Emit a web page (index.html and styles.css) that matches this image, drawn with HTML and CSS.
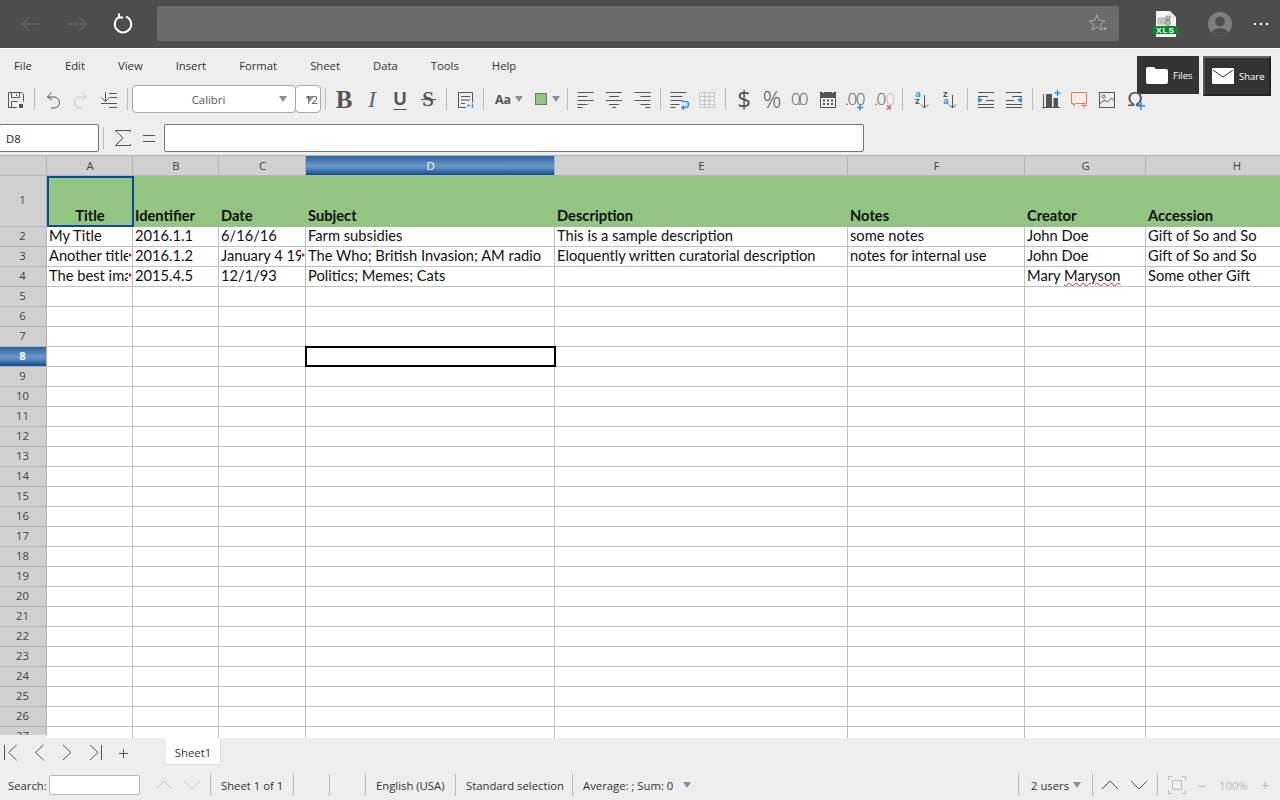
FILE: index.html
```html
<!DOCTYPE html>
<html lang="en">
<head>
<meta charset="utf-8">
<title>Sheet1</title>
<link rel="stylesheet" href="styles.css">
</head>
<body>
<div class="page">
  <header class="browser">
    <svg class="b-ic b-back" viewBox="0 0 24 24"><path d="M21 12H3M10 5l-7 7 7 7"/></svg>
    <svg class="b-ic b-fwd" viewBox="0 0 24 24"><path d="M3 12h18M14 5l7 7-7 7"/></svg>
    <svg class="b-ic b-reload" viewBox="0 0 24 24"><path d="M9 4.600a8.200 8.200 0 1 0 6 0"/><path d="M8 1.500v4h4" /></svg>
    <div class="address">
      <svg class="b-star" viewBox="0 0 20 20"><path d="M9 2l2.200 5.400 5.800.4-4.500 3.700 1.400 5.600L9 14.100l-4.900 3 1.400-5.600L1 7.800l5.800-.4z"/><path d="M15 15.500h4M17 13.500v4"/></svg>
    </div>
    <svg class="b-xls" viewBox="0 0 26 26"><path class="x-doc" d="M3 0h14l6 6v20H3z"/><path class="x-fold" d="M17 0v6h6"/><path class="x-grid" d="M5 7h11v6H5zM5 9h11M5 11h11M8 7v6M11 7v6M14 7v6"/><circle class="x-c" cx="15" cy="7" r="2"/><circle class="x-c" cx="15" cy="12" r="2.500"/><rect class="x-band" x="0" y="15" width="25" height="8"/><text class="x-t" x="12.500" y="22">XLS</text></svg>
    <svg class="b-avatar" viewBox="0 0 24 24"><circle class="av-bg" cx="12" cy="12" r="12"/><circle class="av-fg" cx="12" cy="9.500" r="5"/><path class="av-fg" d="M3.500 20.500a9 6.500 0 0 1 17 0A12 12 0 0 1 12 24a12 12 0 0 1-8.500-3.500z"/></svg>
    <div class="b-dots"><i></i><i></i><i></i></div>
  </header>

  <nav class="menu">
    <span>File</span><span>Edit</span><span>View</span><span>Insert</span><span>Format</span><span>Sheet</span><span>Data</span><span>Tools</span><span>Help</span>
  </nav>

  <a class="float-btn files">
    <svg viewBox="0 0 22 17"><path d="M0 2a2 2 0 0 1 2-2h6l2 2h10a2 2 0 0 1 2 2v11a2 2 0 0 1-2 2H2a2 2 0 0 1-2-2z"/></svg>
    <span>Files</span>
  </a>
  <a class="float-btn share">
    <svg viewBox="0 0 22 16"><rect width="22" height="16" rx="1"/><path class="env" d="M1 2l10 7 10-7"/></svg>
    <span>Share</span>
  </a>

  <div class="toolbar">
    <button class="tb"><svg class="ic" viewBox="0 0 24 24"><path d="M4.500 5.500h13l2 2v7M12.500 20.500h-8zM4.500 5.500v15M7.500 5.500v5h8v-5M12.500 7v2M7.500 20.500v-6h6"/><rect class="solid" x="15" y="17" width="4" height="4"/></svg></button>
    <i class="sep"></i>
    <button class="tb"><svg class="ic" viewBox="0 0 24 24"><path d="M10.500 5.500L6.500 10l4.500 3M6.500 10H13a5.500 5.500 0 0 1 0 11h-3"/></svg></button>
    <button class="tb"><svg class="ic off" viewBox="0 0 24 24"><path d="M13.500 5.500l4 4.500-4.500 3M17.500 10H11a5.500 5.500 0 0 0 0 11h3"/></svg></button>
    <button class="tb"><svg class="ic" viewBox="0 0 24 24"><path d="M8.500 5v9M4.500 10.500l4 4 4-4M12 6.500h8M13 10.500h7M4 16.500h16M12 20.500h8"/></svg></button>
    <i class="sep"></i>
    <div class="combo font-combo"><span>Calibri</span><b class="caret"></b></div>
    <div class="combo size-combo"><b class="caret"></b><span>12</span></div>
    <i class="sep"></i>
    <button class="tb g g-b">B</button>
    <button class="tb g g-i">I</button>
    <button class="tb g g-u">U</button>
    <button class="tb g g-s">S</button>
    <i class="sep"></i>
    <button class="tb"><svg class="ic" viewBox="0 0 24 24"><path d="M13 20.500H5.500v-15h14v10M8 9.500h9M8 13h9M8 16.500h4"/><path class="blue" d="M14 18.500h3"/><path class="blue" d="M19.500 16.500v4.500"/></svg></button>
    <i class="sep"></i>
    <div class="split split-aa"><span class="aa">Aa</span><b class="caret"></b></div>
    <div class="split split-sw"><i class="swatch"></i><b class="caret"></b></div>
    <i class="sep"></i>
    <button class="tb"><svg class="ic" viewBox="0 0 24 24"><path d="M3.500 5.500h16M3.500 9.500h10M3.500 13.500h16M3.500 17.500h10M3.500 20.500h5"/></svg></button>
    <button class="tb"><svg class="ic" viewBox="0 0 24 24"><path d="M4 5.500h16M7 9.500h10M4 13.500h16M7 17.500h10M10 20.500h4"/></svg></button>
    <button class="tb"><svg class="ic" viewBox="0 0 24 24"><path d="M4.500 5.500h16M10.500 9.500h10M4.500 13.500h16M10.500 17.500h10M15.500 20.500h5"/></svg></button>
    <i class="sep"></i>
    <button class="tb"><svg class="ic" viewBox="0 0 24 24"><path d="M3.500 5.500h16M3.500 9.500h12M3.500 13.500h12M3.500 17.500h9M3.500 20.500h5"/><path class="blue" d="M15 14.500h3.500a2.500 2.500 0 0 1 0 6H15M17 18.500l-2 2 2 2"/></svg></button>
    <button class="tb"><svg class="ic off" viewBox="0 0 24 24"><path d="M4.500 5.500h15v15h-15zM4.500 9.500h15M4.500 13.500h15M4.500 17.500h15M9.500 5.500v15M14.500 5.500v15"/></svg></button>
    <i class="sep"></i>
    <button class="tb g g-cur">$</button>
    <button class="tb g g-pct">%</button>
    <button class="tb"><svg class="ic" viewBox="0 0 24 24"><text class="num num-a" x="3" y="18">0.0</text></svg></button>
    <button class="tb"><svg class="ic" viewBox="0 0 24 24"><path d="M4.500 7.500h15v13h-15z"/><path class="solid" d="M4 5h16v6H4z"/><path class="dash" d="M7 13.500h2M11 13.500h2M15 13.500h2M7 17h2M11 17h2M15 17h2"/><path class="light" d="M7.500 4v2M16.500 4v2"/></svg></button>
    <button class="tb"><svg class="ic" viewBox="0 0 24 24"><text class="num" x="1" y="18">.00</text><path class="blue" d="M13 20.500h6M16 17.500v6"/></svg></button>
    <button class="tb"><svg class="ic" viewBox="0 0 24 24"><text class="num" x="2" y="18">.0</text><text class="num num-off" x="13.500" y="18">0</text><path class="red" d="M15 18.500l4 4M19 18.500l-4 4"/></svg></button>
    <i class="sep"></i>
    <button class="tb"><svg class="ic" viewBox="0 0 24 24"><text class="az az-b" x="6" y="10">a</text><text class="az" x="6" y="17">z</text><path d="M15.500 8v13M12 17.500l3.500 3.500 3.500-3.500"/></svg></button>
    <button class="tb"><svg class="ic" viewBox="0 0 24 24"><text class="az" x="6" y="10">z</text><text class="az az-b" x="6" y="17">a</text><path d="M15.500 8v13M12 17.500l3.500 3.500 3.500-3.500"/></svg></button>
    <i class="sep"></i>
    <button class="tb"><svg class="ic" viewBox="0 0 24 24"><path d="M4 5.500h16M4 9.500h10M12 13.500h8M4 17.500h16M4 20.500h16"/><path class="bluef" d="M4 10v6l5-3z"/></svg></button>
    <button class="tb"><svg class="ic" viewBox="0 0 24 24"><path d="M4 5.500h16M10 9.500h10M4 13.500h8M4 17.500h16M4 20.500h16"/><path class="bluef" d="M20 10v6l-5-3z"/></svg></button>
    <i class="sep"></i>
    <button class="tb"><svg class="ic" viewBox="0 0 24 24"><path d="M4.500 7v14M3 20.500h18"/><path class="solid" d="M7 7h6v13H7zM14.500 11H19v9h-4.500z"/><path class="blue" d="M15.500 6h6M18.500 3v6"/></svg></button>
    <button class="tb"><svg class="ic orange" viewBox="0 0 24 24"><path d="M4.500 5.500h15v11h-11l-2 2v-2h-2zM14 18.500h6M17 15.500v6"/></svg></button>
    <button class="tb"><svg class="ic" viewBox="0 0 24 24"><rect x="4.500" y="5.500" width="15" height="15"/><circle cx="8.500" cy="9.500" r="1.500"/><path d="M4.500 17l5-4 3 2 4-4 3 3"/></svg></button>
    <button class="tb omega"><span>Ω</span><svg class="plus" viewBox="0 0 10 10"><path class="blue" d="M1 5h8M5 1v8"/></svg></button>
  </div>

  <div class="formula">
    <div class="namebox">D8</div>
    <i class="fsep"></i>
    <svg class="f-ic f-sigma" viewBox="0 0 18 18"><path d="M16.500 3V1.500h-15L9 9l-7.500 7.500h15V15"/></svg>
    <svg class="f-ic f-eq" viewBox="0 0 14 18"><path d="M1 6.500h12M1 12.500h12"/></svg>
    <div class="f-input"></div>
  </div>

  <section class="sheet">
    <div class="row head">
      <b class="corner"></b><b>A</b><b>B</b><b>C</b><b class="active">D</b><b>E</b><b>F</b><b>G</b><b>H</b>
    </div>
    <div class="row r1"><b>1</b><i class="ctr a1">Title</i><i>Identifier</i><i>Date</i><i>Subject</i><i>Description</i><i>Notes</i><i>Creator</i><i>Accession</i></div>
    <div class="row"><b>2</b><i>My Title</i><i>2016.1.1</i><i>6/16/16</i><i>Farm subsidies</i><i>This is a sample description</i><i>some notes</i><i>John Doe</i><i>Gift of So and So</i></div>
    <div class="row"><b>3</b><i class="clip">Another title here<u></u></i><i>2016.1.2</i><i class="clip">January 4 1967<u></u></i><i>The Who; British Invasion; AM radio</i><i>Eloquently written curatorial description</i><i>notes for internal use</i><i>John Doe</i><i>Gift of So and So</i></div>
    <div class="row"><b>4</b><i class="clip">The best image ever<u></u></i><i>2015.4.5</i><i>12/1/93</i><i>Politics; Memes; Cats</i><i></i><i></i><i>Mary <span class="typo">Maryson</span></i><i>Some other Gift</i></div>
    <div class="row"><b>5</b><i></i><i></i><i></i><i></i><i></i><i></i><i></i><i></i></div>
    <div class="row"><b>6</b><i></i><i></i><i></i><i></i><i></i><i></i><i></i><i></i></div>
    <div class="row"><b>7</b><i></i><i></i><i></i><i></i><i></i><i></i><i></i><i></i></div>
    <div class="row"><b class="active">8</b><i></i><i></i><i></i><i class="sel"></i><i></i><i></i><i></i><i></i></div>
    <div class="row"><b>9</b><i></i><i></i><i></i><i></i><i></i><i></i><i></i><i></i></div>
    <div class="row"><b>10</b><i></i><i></i><i></i><i></i><i></i><i></i><i></i><i></i></div>
    <div class="row"><b>11</b><i></i><i></i><i></i><i></i><i></i><i></i><i></i><i></i></div>
    <div class="row"><b>12</b><i></i><i></i><i></i><i></i><i></i><i></i><i></i><i></i></div>
    <div class="row"><b>13</b><i></i><i></i><i></i><i></i><i></i><i></i><i></i><i></i></div>
    <div class="row"><b>14</b><i></i><i></i><i></i><i></i><i></i><i></i><i></i><i></i></div>
    <div class="row"><b>15</b><i></i><i></i><i></i><i></i><i></i><i></i><i></i><i></i></div>
    <div class="row"><b>16</b><i></i><i></i><i></i><i></i><i></i><i></i><i></i><i></i></div>
    <div class="row"><b>17</b><i></i><i></i><i></i><i></i><i></i><i></i><i></i><i></i></div>
    <div class="row"><b>18</b><i></i><i></i><i></i><i></i><i></i><i></i><i></i><i></i></div>
    <div class="row"><b>19</b><i></i><i></i><i></i><i></i><i></i><i></i><i></i><i></i></div>
    <div class="row"><b>20</b><i></i><i></i><i></i><i></i><i></i><i></i><i></i><i></i></div>
    <div class="row"><b>21</b><i></i><i></i><i></i><i></i><i></i><i></i><i></i><i></i></div>
    <div class="row"><b>22</b><i></i><i></i><i></i><i></i><i></i><i></i><i></i><i></i></div>
    <div class="row"><b>23</b><i></i><i></i><i></i><i></i><i></i><i></i><i></i><i></i></div>
    <div class="row"><b>24</b><i></i><i></i><i></i><i></i><i></i><i></i><i></i><i></i></div>
    <div class="row"><b>25</b><i></i><i></i><i></i><i></i><i></i><i></i><i></i><i></i></div>
    <div class="row"><b>26</b><i></i><i></i><i></i><i></i><i></i><i></i><i></i><i></i></div>
    <div class="row last"><b>27</b><i></i><i></i><i></i><i></i><i></i><i></i><i></i><i></i></div>
  </section>

  <div class="tabs">
    <svg class="nav" viewBox="0 0 28 24"><path d="M4.500 4v15M16.500 4l-8 7.500 8 7.500"/></svg>
    <svg class="nav" viewBox="0 0 28 24"><path d="M15.500 4l-8 7.500 8 7.500"/></svg>
    <svg class="nav" viewBox="0 0 28 24"><path d="M7 4l8 7.500-8 7.500"/></svg>
    <svg class="nav" viewBox="0 0 28 24"><path d="M17.500 4v15M6 4l8 7.500-8 7.500"/></svg>
    <svg class="nav" viewBox="0 0 28 24"><path d="M7 12.500h9M11.500 8v9"/></svg>
    <div class="tab">Sheet1</div>
  </div>

  <footer class="status">
    <div class="st-search">
      <label>Search:</label>
      <div class="search-box"></div>
      <svg class="st-ar off" viewBox="0 0 18 10"><path d="M1 9l8-8 8 8"/></svg>
      <svg class="st-ar off" viewBox="0 0 18 10"><path d="M1 1l8 8 8-8"/></svg>
    </div>
    <div class="cell c-sheet">Sheet 1 of 1</div>
    <div class="cell c-empty"></div>
    <div class="cell c-empty"></div>
    <div class="cell c-lang">English (USA)</div>
    <div class="cell c-mode">Standard selection</div>
    <div class="cell c-sum">Average: ; Sum: 0<b class="caret"></b></div>
    <div class="cell c-users"><span>2 users</span><b class="caret"></b></div>
    <div class="cell c-arrows">
      <svg class="st-ar" viewBox="0 0 18 10"><path d="M1 9l8-8 8 8"/></svg>
      <svg class="st-ar" viewBox="0 0 18 10"><path d="M1 1l8 8 8-8"/></svg>
    </div>
    <div class="cell c-zoom">
      <svg class="fit" viewBox="0 0 18 18"><path d="M4.500 4.500h9v9h-9z"/><path d="M.5 4V.5H4M14 .5h3.500V4M17.500 14v3.500H14M4 17.500H.5V14"/></svg>
      <span class="z-minus">−</span><span class="z-val">100%</span><span class="z-plus">+</span>
    </div>
  </footer>
</div>
</body>
</html>
```
FILE: styles.css
```css
* { box-sizing: border-box; }
html, body { margin: 0; padding: 0; }
body { font-family: "Open Sans", "Noto Sans", sans-serif; font-size: 11.300px; color: #333; background: #eee; overflow: hidden; }
.page { position: relative; display: flex; flex-direction: column; width: 1280px; height: 800px; overflow: hidden; background: #eee; }

/* Browser chrome */
.browser { display: flex; align-items: center; height: 49px; flex: none; padding: 0 0 1px 19px; background: #4d4d4d; border-bottom: 1px solid #fff; }
.b-ic { width: 24px; height: 24px; fill: none; stroke-width: 1; flex: none; }
.b-back, .b-fwd { stroke: #6d6d6d; }
.b-back { margin-right: 22px; }
.b-fwd { margin-right: 22px; }
.b-reload { stroke: #fff; stroke-width: 2; }
.address { display: flex; align-items: center; justify-content: flex-end; width: 962px; height: 35px; margin: -1px 0 0 22px; padding-right: 11px; background: #6b6b6b; border-radius: 3px; }
.b-star { width: 20px; height: 20px; fill: none; stroke: #aaa; stroke-width: 1; }
.b-xls { width: 26px; height: 26px; margin-left: 34px; flex: none; }
.x-doc { fill: #f6f6f6; }
.x-fold { fill: none; stroke: #bbb; stroke-width: .7; }
.x-grid { fill: none; stroke: #999; stroke-width: .8; }
.x-c { fill: none; stroke: #777; stroke-width: 1; }
.x-band { fill: #0a8a2a; }
.x-t { font: bold 8px "Liberation Sans", sans-serif; fill: #fff; text-anchor: middle; letter-spacing: 1px; }
.b-avatar { width: 24px; height: 24px; margin-left: 29px; flex: none; }
.av-bg { fill: #808080; }
.av-fg { fill: #4f4f4f; }
.b-dots { display: flex; gap: 4px; margin-left: 22px; }
.b-dots i { width: 2px; height: 2px; background: #fff; }

/* Menu */
.menu { display: flex; align-items: center; gap: 33px; height: 36px; flex: none; padding: 0 0 4px 14px; color: #333; }

/* Files / share buttons floating over the toolbar */
.float-btn { position: absolute; display: flex; align-items: center; color: #fff; background: #333; font-size: 9.500px; }
.files { left: 1137px; top: 56px; width: 62px; height: 38px; padding-left: 9px; gap: 5px; }
.files svg { width: 22px; height: 17px; fill: #fff; }
.share { left: 1203px; top: 56px; width: 68px; height: 40px; padding-left: 7px; gap: 5px; border: 2px solid #222; border-top-color: #666; border-left-color: #555; }
.share svg { width: 22px; height: 16px; fill: #fff; flex: none; }
.share .env { fill: none; stroke: #333; stroke-width: 1; }

/* Toolbar */
.toolbar { display: flex; align-items: center; height: 28px; flex: none; margin-bottom: 11px; padding-left: 2px; }
.tb { display: flex; align-items: center; justify-content: center; width: 28px; height: 28px; flex: none; padding: 0; border: 0; background: none; color: #555; font-family: inherit; position: relative; }
.sep { width: 9px; height: 22px; flex: none; background: linear-gradient(#bbb, #bbb) center / 1px 100% no-repeat; }
.ic { width: 24px; height: 24px; fill: none; stroke: #555; stroke-width: 1; }
.ic.off { stroke: #c8c8c8; }
.ic.orange { stroke: #ee7a50; }
.ic .solid { fill: #555; stroke: none; }
.ic .blue, .plus .blue { stroke: #2299ee; stroke-width: 1.500; fill: none; }
.ic .bluef { fill: #2299ee; stroke: none; }
.ic .red { stroke: #dd5566; stroke-width: 1.500; }
.ic .dash { stroke: #555; stroke-width: 2; }
.ic .light { stroke: #eee; stroke-width: 1; }
.ic .num { font: 300 17px "Open Sans", sans-serif; fill: #555; stroke: none; letter-spacing: -1.500px; }
.ic .num-a { letter-spacing: -3px; }
.ic .num-off { fill: #bbb; }
.ic .az { font: bold 9.500px "Open Sans", sans-serif; fill: #555; stroke: none; }
.ic .az-b { fill: #2299ee; }
.combo { position: relative; display: flex; align-items: center; height: 28px; flex: none; background: #fff; border: 1px solid #aaa; border-radius: 4px; color: #555; }
.font-combo { width: 164px; justify-content: center; padding-right: 11px; }
.size-combo { width: 26px; padding-left: 9px; margin-left: -1px; }
.size-combo span { position: relative; }
.caret { display: block; width: 0; height: 0; border-left: 4px solid transparent; border-right: 4px solid transparent; border-top: 6px solid #8a909a; }
.combo .caret { position: absolute; right: 8px; top: 10px; }
.size-combo .caret { right: 6px; }
.g { font-family: "Liberation Serif", serif; font-size: 22px; line-height: 1; }
.g-b { font-weight: bold; font-size: 25px; }
.g-i { font-style: italic; font-size: 24px; color: #666; }
.g-u { font-family: "Liberation Sans", sans-serif; font-weight: bold; font-size: 18px; text-decoration: underline 1px; text-underline-offset: 4px; }
.g-s { font-weight: bold; font-size: 21px; }
.g-s::after { content: ""; position: absolute; left: 7px; right: 6px; top: 14px; height: 1px; background: #555; }
.g-cur { font-family: "Open Sans", sans-serif; font-size: 24px; }
.g-pct { font-family: "Open Sans", sans-serif; font-size: 23px; font-weight: 300; }
.split { display: flex; align-items: center; height: 28px; flex: none; }
.split-aa { width: 42px; padding-left: 7px; gap: 4px; }
.aa { font: bold 12.500px "Open Sans", sans-serif; color: #555; }
.split-sw { width: 33px; padding-left: 5px; gap: 5px; }
.swatch { width: 12px; height: 12px; background: #92c581; border: 1px solid #777; }
.omega { font: 21px "Liberation Sans", sans-serif; }
.plus { position: absolute; right: 3px; bottom: 2px; width: 10px; height: 10px; }

/* Formula bar */
.formula { display: flex; align-items: center; height: 28px; flex: none; margin-bottom: 3px; }
.namebox { display: flex; align-items: center; width: 100px; height: 28px; margin-left: -1px; padding-left: 6px; background: #fff; border: 1px solid #777; border-radius: 2px; color: #222; }
.fsep { width: 1px; height: 22px; margin: 0 10px 0 4px; background: #bbb; flex: none; }
.f-ic { fill: none; stroke: #555; stroke-width: 1; flex: none; }
.f-sigma { width: 18px; height: 18px; }
.f-eq { width: 14px; height: 18px; margin-left: 10px; }
.f-input { width: 700px; height: 28px; margin-left: 8px; background: #fff; border: 1px solid #777; border-radius: 2px; }

/* Sheet */
.sheet { flex: 1; min-height: 0; overflow: hidden; background: #fff; }
.row { display: grid; grid-template-columns: 47px 86px 86px 87px 249px 293px 177px 121px 182px; height: 20px; font: 14.700px/16px "Lato", sans-serif; color: #111; }
.row > b { display: block; padding-right: 1px; font: 11.300px/18px "Open Sans", sans-serif; color: #444; text-align: center; background: #d0d0d0; border-right: 1px solid #b4b4b4; border-bottom: 1px solid #b4b4b4; }
.row > i { display: block; position: relative; font-style: normal; padding-left: 2px; white-space: nowrap; border-right: 1px solid #c0c0c0; border-bottom: 1px solid #c0c0c0; overflow: hidden; }
.row > b.active { color: #fff; font-weight: 700; background: linear-gradient(#2c5f9f, #6a97c9 50%, #5a8abf 65%, #0d4c8e); }
.row.head { height: 21px; }
.head > b { padding: 0 0 0 1px; line-height: 19px; border-top: 1px solid #b4b4b4; background: #d0d0d0; }
.head > b.active { font-weight: 400; }
.r1 { height: 51px; }
.r1 > b { line-height: 48px; }
.r1 > i { font-weight: 700; background: #92c581; border-right: 0; border-bottom-color: #92c581; padding-top: 31px; }
.r1 > i.ctr { padding-left: 0; text-align: center; }
.r1 > i.a1 { overflow: visible; z-index: 2; }
.a1::after { content: ""; position: absolute; left: 0; top: 0; right: -1px; bottom: -1px; border: 2px solid #0b4a9e; }
.row > i.sel { overflow: visible; z-index: 2; }
.sel::after { content: ""; position: absolute; left: -1px; top: -1px; right: -2px; bottom: -1px; border: 2px solid #000; }
.clip u { position: absolute; right: 0; top: 3px; width: 4px; height: 11px; background: #fff; }
.clip u::after { content: ""; position: absolute; right: 0; top: 3px; border-left: 3px solid #e00; border-top: 2.500px solid transparent; border-bottom: 2.500px solid transparent; }
.typo { text-decoration: underline wavy #e02020 1px; text-underline-offset: 1px; }
.last > b { height: 8px; overflow: hidden; border: 0; border-right: 1px solid #b4b4b4; }
.last { background: #eee; }
.last > i { background: #fff; }

/* Tabs */
.tabs { display: flex; height: 32px; flex: none; align-items: flex-start; padding-top: 3px; }
.nav { width: 28px; height: 24px; margin-right: 0; flex: none; fill: none; stroke: #555; stroke-width: 1; }
.tab { display: flex; align-items: center; justify-content: center; width: 55px; height: 27px; margin: -3px 0 0 26px; padding-top: 2px; background: #fff; border-right: 1px solid #ddd; border-bottom: 1px solid #ddd; color: #333; }

/* Status */
.status { display: flex; align-items: center; height: 30px; flex: none; color: #333; }
.st-search { display: flex; align-items: center; width: 210px; padding-left: 8px; }
.st-search label { width: 41px; }
.search-box { width: 91px; height: 20px; background: #fff; border: 1px solid #bbb; border-radius: 2px; }
.st-ar { width: 18px; height: 10px; fill: none; stroke: #555; stroke-width: 1; flex: none; }
.st-ar.off { stroke: #ccc; }
.st-search .search-box + .st-ar { margin-left: 15px; }
.st-search .st-ar + .st-ar { margin-left: 10px; }
.cell { display: flex; align-items: center; height: 22px; padding-left: 10px; border-left: 1px solid #bbb; white-space: nowrap; flex: none; }
.c-sheet { width: 83px; }
.c-empty { width: 36px; }
.c-lang { width: 90px; }
.c-mode { width: 117px; }
.c-sum { width: 446px; gap: 10px; }
.c-users { width: 74px; padding-left: 12px; gap: 4px; }
.c-arrows { width: 65px; padding-left: 8px; gap: 11px; }
.c-zoom { flex: 1; padding-left: 10px; color: #bbb; }
.fit { width: 18px; height: 18px; fill: none; stroke: #bbb; stroke-width: 1; flex: none; }
.z-minus { margin-left: 12px; font-size: 14px; }
.z-val { margin-left: 13px; }
.z-plus { margin-left: 13px; font-size: 15px; }
```
